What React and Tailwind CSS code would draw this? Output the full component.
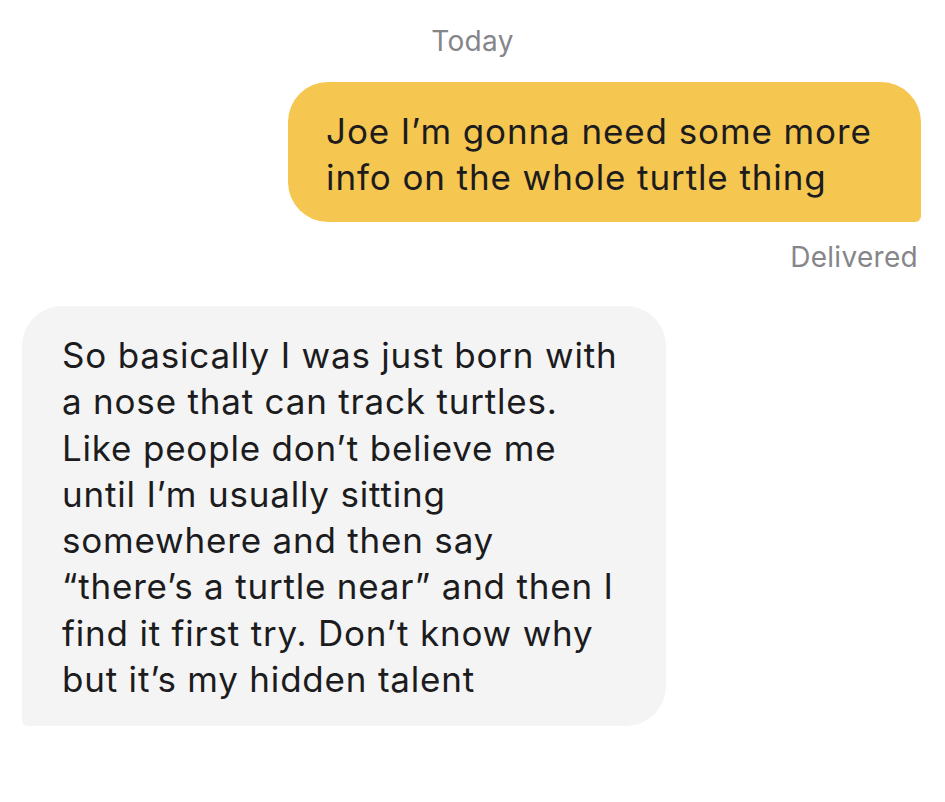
export default function App() {
  return (
    <div className="min-h-screen w-full bg-white text-[#1c1c1e]" style={{ fontFamily: 'Inter, "Liberation Sans", sans-serif' }}>
      <div className="flex flex-col pt-[26px]">
        {/* Date header */}
        <div className="text-center text-[28px] leading-[30px] tracking-[0.3px] text-[#86868a]">Today</div>

        {/* Outgoing message */}
        <div className="mt-[26px] flex justify-end pr-[24px]">
          <div className="w-[633px] rounded-[40px] rounded-br-[6px] bg-[#f5c650] pl-[38px] pr-[20px] pt-[26px] pb-[22px] text-[35px] leading-[46px] tracking-[0.9px]">
            Joe I’m gonna need some more
            <br />
            info on the whole turtle thing
          </div>
        </div>
        <div className="mt-[20px] pr-[27px] text-right text-[28px] leading-[30px] tracking-[0.3px] text-[#86868a]">Delivered</div>

        {/* Incoming message */}
        <div className="mt-[34px] flex justify-start pl-[22px]">
          <div className="w-[644px] rounded-[40px] rounded-bl-[6px] bg-[#f4f4f4] pl-[40px] pr-[20px] pt-[26px] pb-[24px] text-[35px] leading-[46.3px] tracking-[0.8px]">
            So basically I was just born with
            <br />
            a nose that can track turtles.
            <br />
            Like people don’t believe me
            <br />
            until I’m usually sitting
            <br />
            somewhere and then say
            <br />
            “there’s a turtle near” and then I
            <br />
            find it first try. Don’t know why
            <br />
            but it’s my hidden talent
          </div>
        </div>
      </div>
    </div>
  );
}
